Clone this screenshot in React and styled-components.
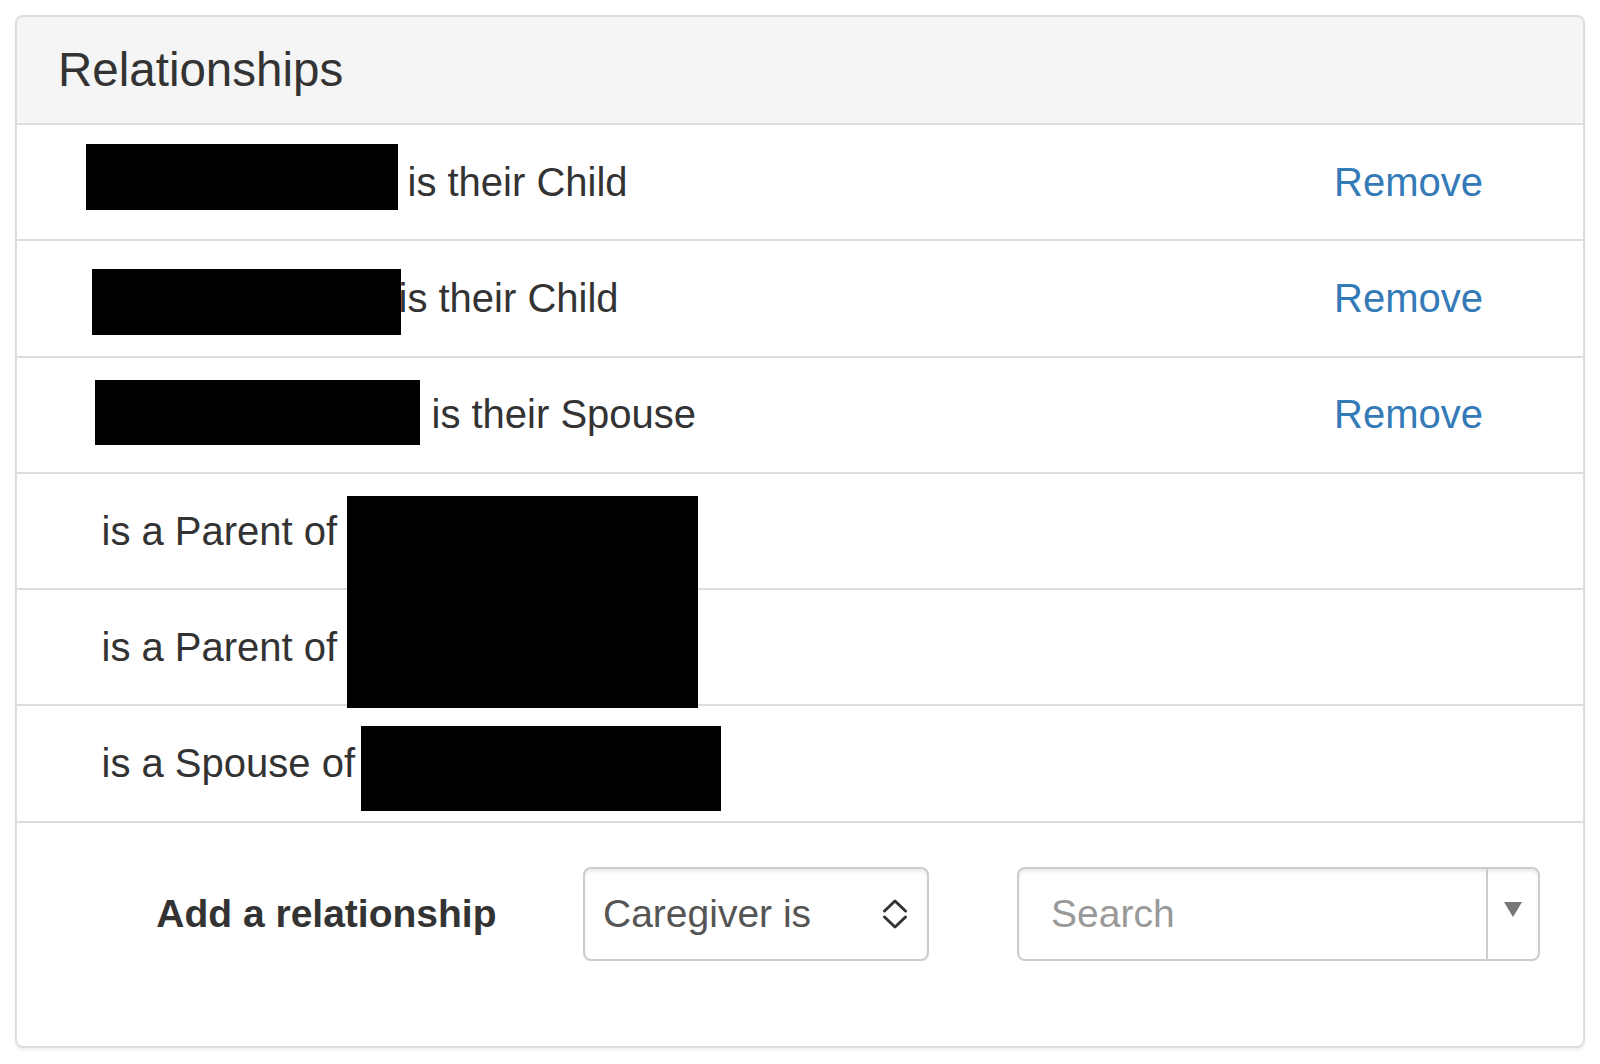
import React from "react";
import styled, { createGlobalStyle } from "styled-components";

const GlobalStyle = createGlobalStyle`
  html, body {
    margin: 0;
    padding: 0;
    background: #ffffff;
  }
  body {
    font-family: "Liberation Sans", Arial, Helvetica, sans-serif;
    color: #333333;
  }
  * { box-sizing: border-box; }
`;

const Page = styled.div`
  padding: 15px;
`;

const Panel = styled.section`
  width: 1570px;
  height: 1033px;
  border: 2px solid #dddddd;
  border-radius: 8px;
  background: #ffffff;
  box-shadow: 0 3px 3px rgba(0, 0, 0, 0.05);
  overflow: hidden;
  display: flex;
  flex-direction: column;
`;

const Header = styled.header`
  height: 108px;
  flex-shrink: 0;
  background: #f5f5f5;
  border-bottom: 2px solid #dddddd;
  display: flex;
  align-items: center;
  padding: 0 41px;
`;

const Title = styled.h3`
  margin: 0;
  font-size: 47.5px;
  font-weight: 400;
  color: #333333;
  line-height: 1;
`;

const List = styled.div`
  position: relative;
  flex-shrink: 0;
`;

const Row = styled.div`
  height: 116.3px;
  border-bottom: 2px solid #dddddd;
  display: flex;
  align-items: center;
  padding: 0 100px 0 69px;
  font-size: 40px;
  color: #333333;
  white-space: nowrap;
`;

const Redaction = styled.span`
  display: block;
  flex-shrink: 0;
  align-self: flex-start;
  background: #000000;
  width: ${(p) => p.$w}px;
  height: ${(p) => p.$h}px;
  margin-top: ${(p) => p.$top}px;
  margin-left: ${(p) => p.$left || 0}px;
`;

const Overlay = styled.span`
  position: absolute;
  background: #000000;
  left: ${(p) => p.$x}px;
  top: ${(p) => p.$y}px;
  width: ${(p) => p.$w}px;
  height: ${(p) => p.$h}px;
`;

const RowText = styled.span`
  margin-left: ${(p) => p.$left || 0}px;
`;

const RemoveLink = styled.a`
  margin-left: auto;
  color: #337ab7;
  text-decoration: none;
  cursor: pointer;
`;

const Footer = styled.div`
  flex: 1;
  display: flex;
  align-items: flex-start;
  padding-top: 44px;
`;

const LabelCol = styled.label`
  width: 479.5px;
  height: 94px;
  display: flex;
  align-items: center;
  justify-content: flex-end;
  font-size: 39px;
  font-weight: 700;
  color: #333333;
  white-space: nowrap;
`;

const SelectBox = styled.div`
  margin-left: 86.5px;
  width: 346px;
  height: 94px;
  border: 2px solid #cccccc;
  border-radius: 8px;
  box-shadow: inset 0 3px 3px rgba(0, 0, 0, 0.075);
  display: flex;
  align-items: center;
  justify-content: space-between;
  padding: 0 19px 0 18px;
  font-size: 39px;
  color: #555555;
  white-space: nowrap;
`;

const Combo = styled.div`
  margin-left: 88px;
  width: 523px;
  height: 94px;
  border: 2px solid #cccccc;
  border-radius: 8px;
  box-shadow: inset 0 3px 3px rgba(0, 0, 0, 0.075);
  display: flex;
`;

const ComboInput = styled.div`
  flex: 1;
  display: flex;
  align-items: center;
  padding-left: 32px;
  font-size: 39px;
  color: #999999;
  border-right: 2px solid #cccccc;
`;

const ComboButton = styled.div`
  width: 50px;
  display: flex;
  align-items: center;
  justify-content: center;
  padding-bottom: 9px;
`;

const Chevrons = () => (
  <svg width="26" height="30" viewBox="0 0 26 30" aria-hidden="true">
    <polyline
      points="2.5,12 13,2 23.5,12"
      fill="none"
      stroke="#333"
      strokeWidth="3"
      strokeLinecap="round"
      strokeLinejoin="round"
    />
    <polyline
      points="2.5,18 13,28 23.5,18"
      fill="none"
      stroke="#333"
      strokeWidth="3"
      strokeLinecap="round"
      strokeLinejoin="round"
    />
  </svg>
);

const Caret = () => (
  <svg width="18" height="15" viewBox="0 0 18 15" aria-hidden="true">
    <polygon points="0,0 18,0 9,15" fill="#777" />
  </svg>
);

export default function App() {
  return (
    <Page>
      <GlobalStyle />
      <Panel>
        <Header>
          <Title>Relationships</Title>
        </Header>
        <List>
          <Row>
            <Redaction $w={312} $h={66} $top={19} />
            <RowText $left={9.5}>is their Child</RowText>
            <RemoveLink>Remove</RemoveLink>
          </Row>
          <Row>
            <Redaction $w={309} $h={66} $top={28} $left={6} />
            <RowText $left={-2.5}>is their Child</RowText>
            <RemoveLink>Remove</RemoveLink>
          </Row>
          <Row>
            <Redaction $w={325} $h={65} $top={22.5} $left={9} />
            <RowText $left={11.5}>is their Spouse</RowText>
            <RemoveLink>Remove</RemoveLink>
          </Row>
          <Row>
            <RowText $left={15.5}>is a Parent of</RowText>
          </Row>
          <Row>
            <RowText $left={15.5}>is a Parent of</RowText>
          </Row>
          <Row>
            <RowText $left={15.5}>is a Spouse of</RowText>
            <Redaction $w={360} $h={85} $top={19.5} $left={6} />
          </Row>
          <Overlay $x={330} $y={371} $w={351} $h={212} />
        </List>
        <Footer>
          <LabelCol>Add a relationship</LabelCol>
          <SelectBox>
            <span>Caregiver is</span>
            <Chevrons />
          </SelectBox>
          <Combo>
            <ComboInput>Search</ComboInput>
            <ComboButton>
              <Caret />
            </ComboButton>
          </Combo>
        </Footer>
      </Panel>
    </Page>
  );
}
